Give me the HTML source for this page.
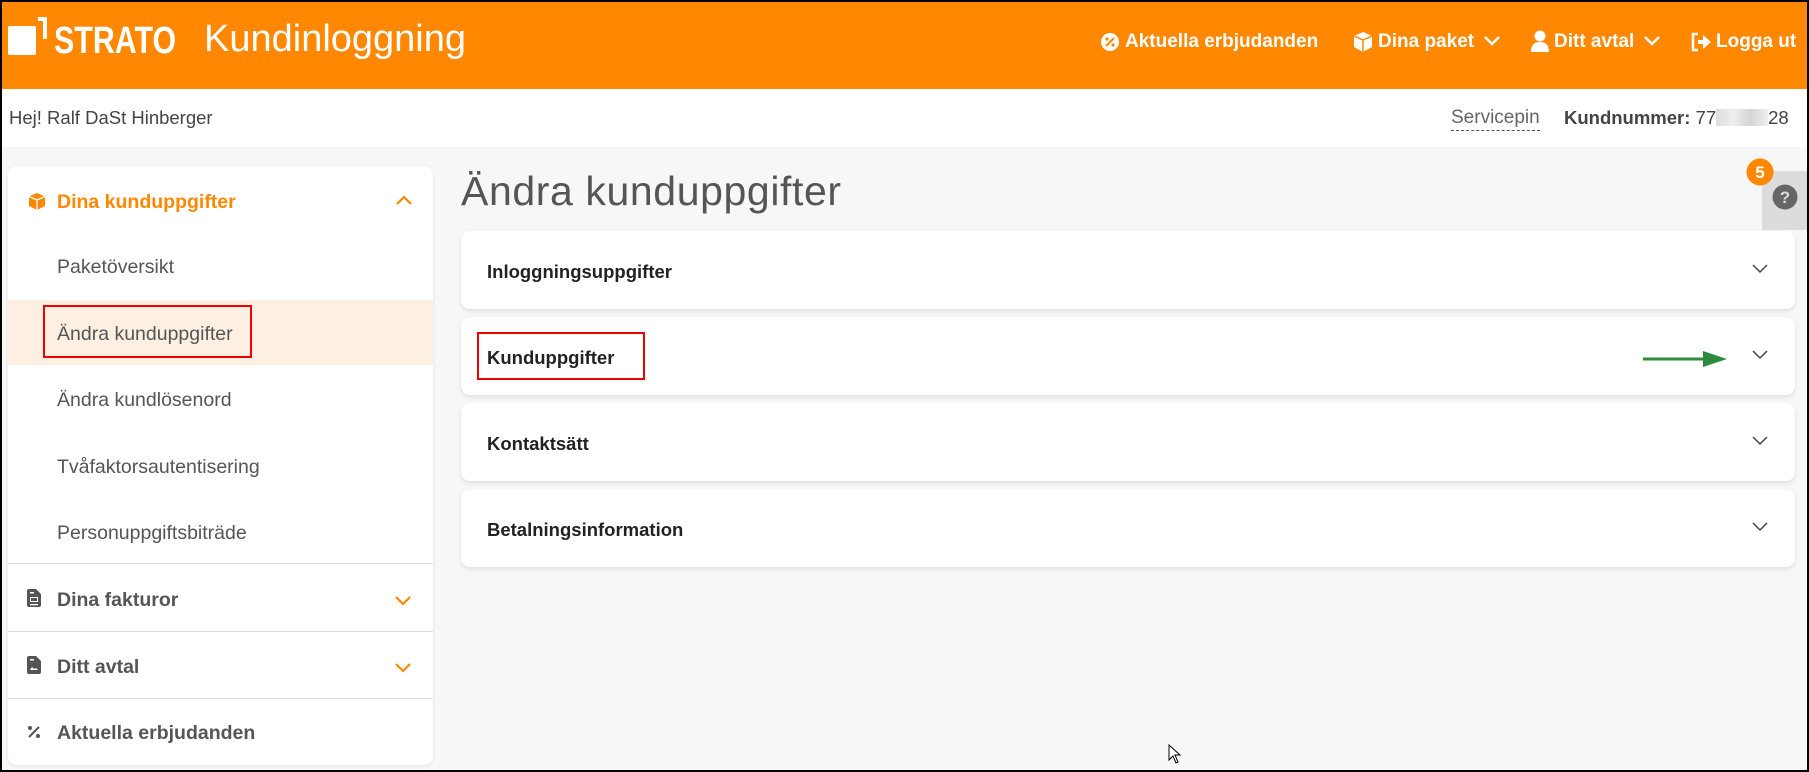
<!DOCTYPE html>
<html><head><meta charset="utf-8"><style>
*{margin:0;padding:0;box-sizing:border-box}
body{width:1809px;height:772px;overflow:hidden;background:#f7f7f7;font-family:"Liberation Sans",sans-serif;position:relative;color:#555}
.frame{position:absolute;inset:0;border:2px solid #000;pointer-events:none;z-index:10}
.hdr{position:absolute;left:0;top:0;width:1809px;height:89px;background:#ff8800;color:#fff}
.wbar{position:absolute;left:0;top:89px;width:1809px;height:58px;background:#fff}
.abs{position:absolute;white-space:nowrap}
.nav{font-size:19px;font-weight:bold;top:30px;line-height:24px}
.card{position:absolute;left:8px;top:166px;width:425px;height:599px;background:#fff;border-radius:9px;box-shadow:0 1px 4px rgba(0,0,0,.08)}
.sb{position:absolute;left:49px;font-size:19.5px;color:#555;line-height:24px;margin-top:2px}
.div{position:absolute;left:0;width:425px;height:1px;background:#ddd}
.panel{position:absolute;left:461px;width:1334px;height:78px;background:#fff;border-radius:9px;box-shadow:0 2px 4px rgba(0,0,0,.1)}
.panel span{position:absolute;left:26px;top:30px;font-size:18.5px;font-weight:bold;color:#222}
.panel svg{position:absolute;left:1290px;top:32px}
</style></head><body>
<div class="hdr">
 <svg class="abs" style="left:8px;top:17px" width="40" height="38" viewBox="0 0 40 38"><rect x="0" y="9" width="28" height="29" rx="2" fill="#fff"/><path d="M30 2 H37 V22" stroke="#fff" stroke-width="4" fill="none"/></svg>
 <div class="abs" style="left:54px;top:20px;font-size:38px;font-weight:bold;line-height:42px;transform:scaleX(0.8);transform-origin:left">STRATO</div>
 <div class="abs" style="left:204px;top:17px;font-size:38px;line-height:44px">Kundinloggning</div>
 <svg class="abs" style="left:1100px;top:32px" width="20" height="20"><circle cx="10" cy="10" r="9" fill="#fff"/><path d="M6 14 L14 6" stroke="#ff8800" stroke-width="2"/><circle cx="7" cy="7" r="1.6" fill="#ff8800"/><circle cx="13" cy="13" r="1.6" fill="#ff8800"/></svg>
 <div class="abs nav" style="left:1125px">Aktuella erbjudanden</div>
 <svg class="abs" style="left:1353px;top:31px" width="20" height="22"><path d="M10 1 L19 5 V16 L10 21 L1 16 V5Z" fill="#fff"/><path d="M1 5 L10 9 L19 5 M10 9 V21" stroke="#ff8800" stroke-width="1.5" fill="none"/></svg>
 <div class="abs nav" style="left:1378px">Dina paket</div>
 <svg class="abs" style="left:1483px;top:35px" width="18" height="12"><path d="M2 2 L9 9 L16 2" stroke="#fff" stroke-width="2.5" fill="none"/></svg>
 <svg class="abs" style="left:1531px;top:30px" width="18" height="22"><circle cx="9" cy="6" r="5.5" fill="#fff"/><path d="M0 22 Q0 12 9 12 Q18 12 18 22Z" fill="#fff"/></svg>
 <div class="abs nav" style="left:1554px">Ditt avtal</div>
 <svg class="abs" style="left:1643px;top:35px" width="18" height="12"><path d="M2 2 L9 9 L16 2" stroke="#fff" stroke-width="2.5" fill="none"/></svg>
 <svg class="abs" style="left:1690px;top:32px" width="22" height="20"><path d="M8 2 H3 V18 H8" stroke="#fff" stroke-width="2.5" fill="none"/><path d="M8 8 H13 V3 L21 10 L13 17 V12 H8Z" fill="#fff"/></svg>
 <div class="abs nav" style="left:1716px">Logga ut</div>
</div>
<div class="wbar">
 <div class="abs" style="left:9px;top:18px;font-size:18.5px;color:#444">Hej! Ralf DaSt Hinberger</div>
 <div class="abs" style="left:1451px;top:18px;font-size:19px;color:#666;border-bottom:1px dashed #555;padding-bottom:1px">Servicepin</div>
 <div class="abs" style="left:1564px;top:18px;font-size:18.5px;color:#444"><b>Kundnummer:</b> 77<span style="display:inline-block;width:52px;height:17px;background:linear-gradient(90deg,#ddd,#eee,#d5d5d5,#eee);vertical-align:-2px"></span>28</div>
</div>
<div class="card">
 <svg class="abs" style="left:20px;top:26px" width="18" height="19"><path d="M9 1 L17 4.5 V14 L9 18 L1 14 V4.5Z" fill="#ff8800"/><path d="M1 4.5 L9 8 L17 4.5 M9 8 V18" stroke="#fff" stroke-width="1.3" fill="none"/></svg>
 <div class="sb" style="top:22px;font-weight:bold;color:#ff8800">Dina kunduppgifter</div>
 <svg class="abs" style="left:387px;top:28px" width="18" height="12"><path d="M2 10 L9 3 L16 10" stroke="#ff8800" stroke-width="2.2" fill="none"/></svg>
 <div class="sb" style="top:87px">Paketöversikt</div>
 <div class="abs" style="left:0;top:134px;width:425px;height:65px;background:#fdf0e3"></div>
 <div class="abs" style="left:35px;top:139px;width:209px;height:53px;border:2px solid #e00"></div>
 <div class="sb" style="top:154px">Ändra kunduppgifter</div>
 <div class="sb" style="top:220px">Ändra kundlösenord</div>
 <div class="sb" style="top:287px">Tvåfaktorsautentisering</div>
 <div class="sb" style="top:353px">Personuppgiftsbiträde</div>
 <div class="div" style="top:397px"></div>
 <svg class="abs" style="left:19px;top:423px" width="14" height="18"><path d="M0 2 Q0 0 2 0 H9 L14 5 V16 Q14 18 12 18 H2 Q0 18 0 16Z" fill="#555"/><rect x="3" y="8" width="8" height="5" fill="#fff"/><rect x="4" y="9" width="6" height="3" fill="#555"/><rect x="3" y="3" width="4" height="1.5" fill="#fff"/><rect x="3" y="15" width="8" height="1.3" fill="#fff"/></svg>
 <div class="sb" style="top:420px;font-weight:bold">Dina fakturor</div>
 <svg class="abs" style="left:386px;top:429px" width="18" height="12"><path d="M2 2 L9 9 L16 2" stroke="#ff8800" stroke-width="2.2" fill="none"/></svg>
 <div class="div" style="top:465px"></div>
 <svg class="abs" style="left:19px;top:490px" width="14" height="18"><path d="M0 2 Q0 0 2 0 H9 L14 5 V16 Q14 18 12 18 H2 Q0 18 0 16Z" fill="#555"/><path d="M3 14 L5 11 L7 13 L9 12 L11 14Z" fill="#fff"/><rect x="3" y="3" width="4" height="1.5" fill="#fff"/></svg>
 <div class="sb" style="top:487px;font-weight:bold">Ditt avtal</div>
 <svg class="abs" style="left:386px;top:496px" width="18" height="12"><path d="M2 2 L9 9 L16 2" stroke="#ff8800" stroke-width="2.2" fill="none"/></svg>
 <div class="div" style="top:532px"></div>
 <svg class="abs" style="left:19px;top:559px" width="14" height="14"><path d="M2 12 L12 2" stroke="#555" stroke-width="2"/><circle cx="3" cy="3" r="2" fill="#555"/><circle cx="11" cy="11" r="2" fill="#555"/></svg>
 <div class="sb" style="top:553px;font-weight:bold">Aktuella erbjudanden</div>
</div>
<div class="abs" style="left:461px;top:166px;font-size:41px;color:#555;line-height:50px;letter-spacing:0.6px">Ändra kunduppgifter</div>
<div class="panel" style="top:231px"><span>Inloggningsuppgifter</span><svg width="18" height="12"><path d="M2 2 L9 9 L16 2" stroke="#444" stroke-width="1.5" fill="none"/></svg></div>
<div class="panel" style="top:317px"><span>Kunduppgifter</span><svg width="18" height="12"><path d="M2 2 L9 9 L16 2" stroke="#444" stroke-width="1.5" fill="none"/></svg></div>
<div class="panel" style="top:403px"><span>Kontaktsätt</span><svg width="18" height="12"><path d="M2 2 L9 9 L16 2" stroke="#444" stroke-width="1.5" fill="none"/></svg></div>
<div class="panel" style="top:489px"><span>Betalningsinformation</span><svg width="18" height="12"><path d="M2 2 L9 9 L16 2" stroke="#444" stroke-width="1.5" fill="none"/></svg></div>
<div class="abs" style="left:477px;top:332px;width:168px;height:48px;border:2px solid #e00"></div>
<svg class="abs" style="left:1641px;top:350px" width="88" height="18"><path d="M2 9 H64" stroke="#2e8b3e" stroke-width="3"/><path d="M62 1 L86 9 L62 17Z" fill="#2e8b3e"/></svg>
<div class="abs" style="left:1762px;top:171px;width:45px;height:59px;background:#dcdcdc"></div>
<svg class="abs" style="left:1772px;top:184px" width="26" height="26"><circle cx="13" cy="13" r="12.5" fill="#666"/><text x="13" y="19" text-anchor="middle" font-family="Liberation Sans" font-weight="bold" font-size="17" fill="#ddd">?</text></svg>
<svg class="abs" style="left:1746px;top:158px" width="28" height="28"><circle cx="14" cy="14" r="13.5" fill="#ff8800"/><text x="14" y="20" text-anchor="middle" font-family="Liberation Sans" font-weight="bold" font-size="17" fill="#fff">5</text></svg>
<svg class="abs" style="left:1168px;top:744px" width="14" height="20"><path d="M1 1 V16 L5 12 L8 19 L10 18 L7 11 H12Z" fill="#fff" stroke="#000" stroke-width="1"/></svg>
<div class="frame"></div>
</body></html>
